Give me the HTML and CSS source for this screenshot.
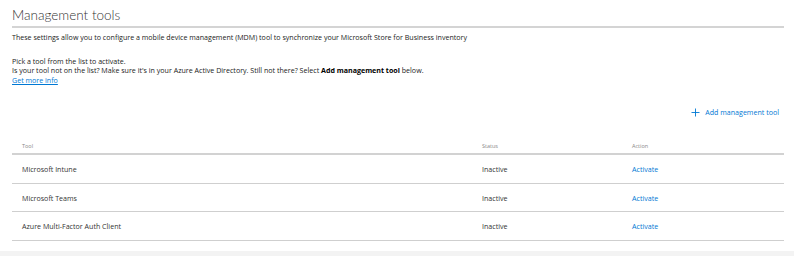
FILE: index.html
```html
<!DOCTYPE html>
<html lang="en">

<head>
    <meta charset="UTF-8">
    <meta name="viewport" content="width=device-width, initial-scale=1.0">
    <title>Management tools</title>
    <link rel="stylesheet" href="styles.css">
</head>

<body>
    <div class="page">
        <h1 class="page-title">Management tools</h1>

        <p class="intro">These settings allow you to configure a mobile device management (MDM) tool to synchronize your Microsoft Store for Business inventory</p>

        <div class="help">
            <p>Pick a tool from the list to activate.</p>
            <p>Is your tool not on the list? Make sure it's in your Azure Active Directory. Still not there? Select <strong>Add management tool</strong> below.</p>
            <a href="#" class="link">Get more info</a>
        </div>

        <!-- Toolbar -->
        <div class="toolbar">
            <button class="add-button">
                <svg class="add-icon" width="9" height="9" viewBox="0 0 9 9">
                    <path d="M4.5 0.5v8M0.5 4.5h8" stroke="#0078d4" stroke-width="0.9" fill="none" />
                </svg>
                Add management tool
            </button>
        </div>

        <!-- Tools table -->
        <div class="tools-table">
            <div class="table-row table-head">
                <div>Tool</div>
                <div>Status</div>
                <div>Action</div>
            </div>
            <div class="table-row">
                <div>Microsoft Intune</div>
                <div>Inactive</div>
                <div><a href="#" class="action">Activate</a></div>
            </div>
            <div class="table-row">
                <div>Microsoft Teams</div>
                <div>Inactive</div>
                <div><a href="#" class="action">Activate</a></div>
            </div>
            <div class="table-row">
                <div>Azure Multi-Factor Auth Client</div>
                <div>Inactive</div>
                <div><a href="#" class="action">Activate</a></div>
            </div>
        </div>
    </div>

    <div class="bottom-band"></div>
</body>

</html>
```

FILE: styles.css
```css
/* Base Styles */
body {
    font-family: 'Open Sans', 'Noto Sans', sans-serif;
    background-color: #fff;
    margin: 0;
    padding: 0;
    color: #222;
    font-size: 7.1px;
}

.page {
    padding: 0 10px 0 12px;
}

.page-title {
    margin: 0;
    padding-top: 5px;
    padding-bottom: 1px;
    font-family: 'Lato', 'Open Sans', sans-serif;
    font-size: 13.5px;
    line-height: 20px;
    font-weight: 300;
    color: #333;
    border-bottom: 2px solid #d4d4d4;
}

.intro {
    margin: 5px 0 0;
    line-height: 9.5px;
}

.help {
    margin-top: 14px;
    line-height: 9.5px;
}

.help p {
    margin: 0;
}

.help strong {
    font-weight: 700;
    color: #000;
}

.link {
    color: #0078d4;
    text-decoration: underline;
}

/* Toolbar */
.toolbar {
    display: flex;
    justify-content: flex-end;
    padding: 20px 5px 0 0;
    height: 20px;
}

.add-button {
    display: flex;
    align-items: center;
    gap: 5px;
    background: none;
    border: none;
    padding: 0;
    height: 14px;
    font-family: inherit;
    font-size: 7.1px;
    color: #0078d4;
    cursor: pointer;
}

/* Table */
.tools-table {
    margin-top: 14px;
}

.table-row {
    display: grid;
    grid-template-columns: 460px 150px 1fr;
    align-items: center;
    height: 26.5px;
    padding-top: 1px;
    border-bottom: 1px solid #cfcfcf;
    color: #333;
}

.table-row > div {
    padding-left: 10px;
}

.table-head {
    height: 14px;
    padding-top: 0;
    font-size: 5.5px;
    color: #888;
    border-bottom: 2px solid #d2d2d2;
}

.action {
    color: #0078d4;
    text-decoration: none;
}

.bottom-band {
    margin-top: 10px;
    height: 10px;
    background-color: #f3f3f3;
}
```
